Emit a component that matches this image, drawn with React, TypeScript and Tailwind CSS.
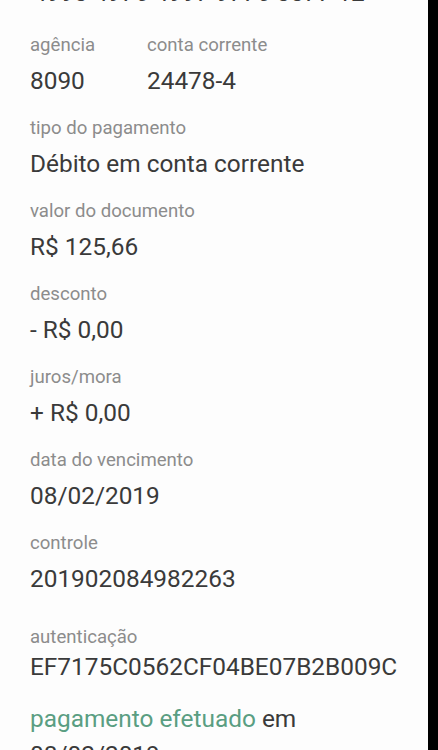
import React from 'react';

type Field = { label: string; value: string; gap?: string; inner?: string };

const fields: Field[] = [
  { label: 'tipo do pagamento', value: 'Débito em conta corrente' },
  { label: 'valor do documento', value: 'R$ 125,66' },
  { label: 'desconto', value: '- R$ 0,00' },
  { label: 'juros/mora', value: '+ R$ 0,00' },
  { label: 'data do vencimento', value: '08/02/2019' },
  { label: 'controle', value: '201902084982263' },
  { label: 'autenticação', value: 'EF7175C0562CF04BE07B2B009C', gap: 'mt-[31px]', inner: 'mt-[3px]' },
];

const App: React.FC = () => {
  return (
    <div className="flex w-[438px] h-[750px] overflow-hidden bg-black font-['Roboto',sans-serif]">
      <div className="w-[428px] h-full bg-[#fdfdfd] px-[30px] overflow-hidden">
        {/* cut-off line from the previous field */}
        <p className="-mt-[22px] pl-[3px] whitespace-nowrap text-[24.4px] leading-[30px] text-[#3a3a3a]">4990 4976 4997 9776 0077 12</p>

        <div className="flex mt-[25px]">
          <div className="w-[117px]">
            <p className="text-[18.6px] leading-[24px] text-[#8c8c8c]">agência</p>
            <p className="mt-[9px] text-[24.4px] leading-[30px] text-[#3a3a3a]">8090</p>
          </div>
          <div>
            <p className="text-[18.6px] leading-[24px] text-[#8c8c8c]">conta corrente</p>
            <p className="mt-[9px] text-[24.4px] leading-[30px] text-[#3a3a3a]">24478-4</p>
          </div>
        </div>

        {fields.map((f) => (
          <div key={f.label} className={f.gap ?? 'mt-[20px]'}>
            <p className="text-[18.6px] leading-[24px] text-[#8c8c8c]">{f.label}</p>
            <p className={`${f.inner ?? 'mt-[9px]'} whitespace-nowrap text-[24.4px] leading-[30px] text-[#3a3a3a]`}>{f.value}</p>
          </div>
        ))}

        <div className="mt-[22px] text-[24.4px] leading-[30px] text-[#3a3a3a]">
          <p>
            <span className="text-[#5a9e82]">pagamento efetuado</span> em
          </p>
          <p className="mt-[6px]">08/02/2019</p>
        </div>
      </div>
      <div className="flex-1 bg-black" />
    </div>
  );
};

export default App;
